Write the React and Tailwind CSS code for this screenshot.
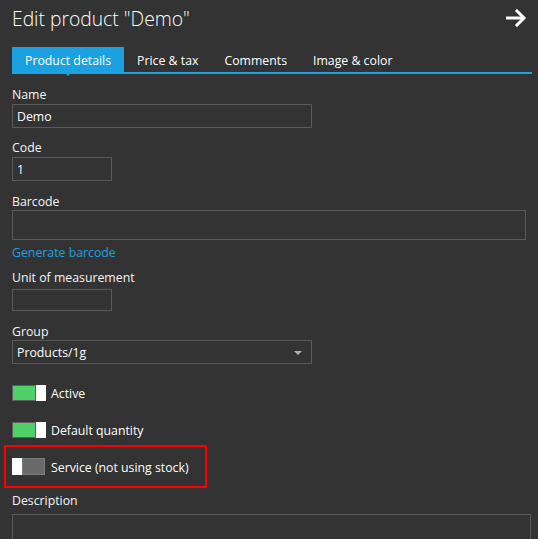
import React from "react";

function Toggle({ on }) {
  if (on) {
    return (
      <div className="flex h-[16px] w-[34px] shrink-0">
        <div className="h-full w-[24px] border border-[#5e5e5e] bg-[#4fd168]" />
        <div className="h-full w-[10px] bg-white" />
      </div>
    );
  }
  return (
    <div className="flex h-[17px] w-[33px] shrink-0">
      <div className="h-full w-[10px] bg-white" />
      <div className="h-full w-[23px] border border-[#7c7c7c] bg-[#6a6a6a]" />
    </div>
  );
}

function Label({ children, className = "" }) {
  return (
    <div className={"text-[12.3px] leading-[18px] text-[#f4f4f4] " + className}>
      <span className="relative top-[1px]">{children}</span>
    </div>
  );
}

export default function App() {
  return (
    <div
      className="relative h-[539px] w-[538px] overflow-hidden bg-[#333333] px-3 text-white"
      style={{ fontFamily: '"Open Sans", "Noto Sans", sans-serif' }}
    >
      <div className="flex h-[47px] items-start justify-between pt-[5px]">
        <div className="text-[19.3px] font-light leading-[28px] text-white">{'Edit product "Demo"'}</div>
        <svg width="22" height="18" viewBox="0 0 22 18" className="mr-[-1px] mt-[4px]">
          <path d="M1 9 H19" stroke="white" strokeWidth="3" fill="none" />
          <path d="M12 2 L19 9 L12 16" stroke="white" strokeWidth="3" fill="none" strokeLinecap="square" />
        </svg>
      </div>

      <div className="relative mr-[-6px] flex h-[27px] border-b-2 border-[#1ba1e2] pt-[1px] text-[12.3px] leading-[25px]">
        <div className="relative -mt-[1px] bg-[#1ba1e2] px-[13px] pt-[1px] text-white">
          Product details
          <div className="absolute left-1/2 top-[25px] h-0 w-0 -translate-x-1/2 border-x-[4px] border-t-[4px] border-x-transparent border-t-[#1ba1e2]" />
        </div>
        <div className="px-[13px]">Price &amp; tax</div>
        <div className="px-[13px]">Comments</div>
        <div className="px-[13px]">Image &amp; color</div>
      </div>

      <Label className="mt-[11px]">Name</Label>
      <div className="mt-[1px] flex h-[24px] w-[300px] items-center border border-[#5b5b55] px-[4px] pt-[2px] text-[12.3px] text-white">
        Demo
      </div>

      <Label className="mt-[10px]">Code</Label>
      <div className="mt-[1px] flex h-[24px] w-[100px] items-center border border-[#5b5b55] px-[4px] pt-[2px] text-[12.3px] text-white">
        1
      </div>

      <Label className="mt-[11px]">Barcode</Label>
      <div className="mt-0 h-[30px] w-[514px] border border-[#5b5b55]" />

      <div className="mt-[3px] text-[12.3px] leading-[18px] text-[#1ba1e2]">
        <span className="relative top-[1px]">Generate barcode</span>
      </div>

      <Label className="mt-[7px]">Unit of measurement</Label>
      <div className="mt-[3px] h-[22px] w-[100px] border border-[#5b5b55]" />

      <Label className="mt-[11px]">Group</Label>
      <div className="relative mt-[0px] flex h-[24px] w-[300px] items-center border border-[#5b5b55] px-[4px] pt-[2px] text-[12.3px] text-white">
        Products/1g
        <div className="absolute right-[9px] top-[10px] h-0 w-0 border-x-[4px] border-t-[4px] border-x-transparent border-t-[#b0b0b0]" />
      </div>

      <div className="mt-[21px] flex h-[16px] items-center gap-[5px]">
        <Toggle on />
        <span className="relative top-[1px] text-[12.3px] leading-[18px]">Active</span>
      </div>

      <div className="mt-[21px] flex h-[16px] items-center gap-[5px]">
        <Toggle on />
        <span className="relative top-[1px] text-[12.3px] leading-[18px]">Default quantity</span>
      </div>

      <div className="-ml-2 mt-[7px] flex h-[43px] w-[203px] items-center gap-[6px] border-2 border-[#ff0000] pl-[6px]">
        <Toggle on={false} />
        <span className="relative top-[1px] text-[12.3px] leading-[18px]">Service (not using stock)</span>
      </div>

      <Label className="mt-[3px]">Description</Label>
      <div className="mt-[5px] h-[60px] w-[519px] border border-[#5b5b55]" />
    </div>
  );
}
